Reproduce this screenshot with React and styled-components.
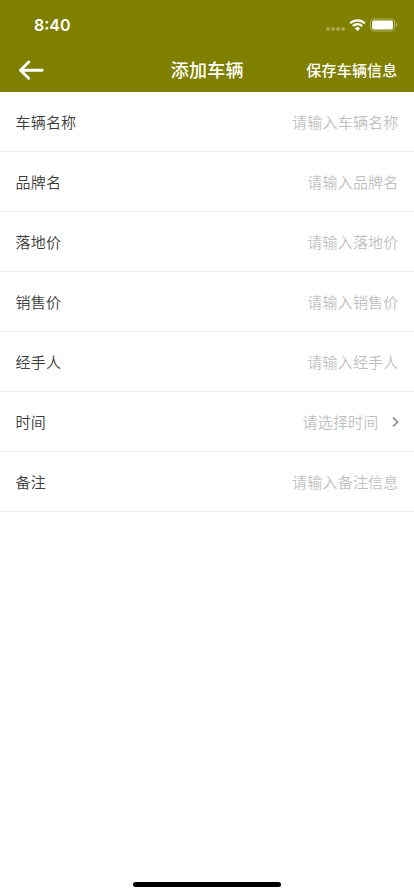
import React, { useState } from "react";
import styled, { createGlobalStyle } from "styled-components";

const GlobalStyle = createGlobalStyle`
  * {
    box-sizing: border-box;
  }
  body {
    margin: 0;
    background-color: #fff;
    font-family: "Noto Sans CJK SC", sans-serif;
  }
`;

const Screen = styled.div`
  display: flex;
  flex-direction: column;
  width: 100%;
  height: 896px;
  background-color: #fff;
  overflow: hidden;
`;

const Header = styled.header`
  height: 92px;
  background-color: #808000;
  color: #fff;
`;

const StatusBar = styled.div`
  display: flex;
  justify-content: space-between;
  align-items: center;
  height: 48px;
  padding: 2px 16px 0 34px;
`;

const Clock = styled.span`
  font-family: Inter, sans-serif;
  font-size: 16px;
  font-weight: 600;
  line-height: 20px;
`;

const StatusIcons = styled.div`
  display: flex;
  align-items: center;
  gap: 4px;
`;

const NavBar = styled.div`
  display: grid;
  grid-template-columns: 1fr auto 1fr;
  align-items: center;
  height: 44px;
  padding: 0 16.5px 0 18px;
`;

const BackButton = styled.button`
  display: flex;
  justify-self: start;
  padding: 0;
  border: none;
  background: transparent;
  color: inherit;
  cursor: pointer;
`;

const Title = styled.h1`
  margin: 0;
  padding: 0 1px 2px 0;
  font-size: 18px;
  font-weight: 500;
  line-height: 26px;
  letter-spacing: 0.3px;
`;

const SaveButton = styled.button`
  justify-self: end;
  padding: 0;
  border: none;
  background: transparent;
  color: inherit;
  font-family: inherit;
  font-size: 15px;
  font-weight: 500;
  line-height: 22px;
  letter-spacing: 0.2px;
  white-space: nowrap;
  cursor: pointer;
`;

const Form = styled.form`
  flex: 1;
`;

const Row = styled.label`
  display: flex;
  align-items: center;
  height: 60px;
  padding: 0 15.5px;
  border-bottom: 1px solid #f0f0f0;
  font-size: 15px;
  font-weight: 350;
  letter-spacing: 0.2px;
`;

const Label = styled.span`
  flex: none;
  color: #3c3c3c;
  line-height: 22px;
`;

const Input = styled.input`
  flex: 1;
  min-width: 0;
  height: 22px;
  padding: 0;
  border: none;
  outline: none;
  background: transparent;
  color: #333;
  font: inherit;
  letter-spacing: inherit;
  text-align: right;
  &::placeholder {
    color: #bfbfbf;
    opacity: 1;
  }
`;

const Picker = styled.span`
  display: flex;
  flex: 1;
  justify-content: flex-end;
  align-items: center;
  gap: 13px;
  color: #bfbfbf;
  line-height: 22px;
`;

const HomeArea = styled.div`
  display: flex;
  justify-content: center;
  height: 14px;
`;

const HomeIndicator = styled.div`
  width: 148px;
  height: 5px;
  border-radius: 3px;
  background-color: #000;
`;

const fields = [
  { name: "carName", label: "车辆名称", placeholder: "请输入车辆名称" },
  { name: "brand", label: "品牌名", placeholder: "请输入品牌名" },
  { name: "landPrice", label: "落地价", placeholder: "请输入落地价" },
  { name: "salePrice", label: "销售价", placeholder: "请输入销售价" },
  { name: "handler", label: "经手人", placeholder: "请输入经手人" },
  { name: "time", label: "时间", placeholder: "请选择时间", picker: true },
  { name: "remark", label: "备注", placeholder: "请输入备注信息" },
];

const SignalIcon = () => (
  <svg width="20" height="14" viewBox="0 0 20 14" fill="#fff" opacity="0.3">
    <circle cx="3" cy="11" r="2" />
    <circle cx="8" cy="11" r="2" />
    <circle cx="13" cy="11" r="2" />
    <circle cx="18" cy="11" r="2" />
  </svg>
);

const WifiIcon = () => (
  <svg width="17" height="12" viewBox="0 0 17 12" fill="none" stroke="#fff">
    <path d="M1.1 4.3a10.6 10.6 0 0 1 14.8 0" strokeWidth="2.3" />
    <path d="M3.8 7.1a6.7 6.7 0 0 1 9.4 0" strokeWidth="2.1" />
    <path d="M8.5 11.9 5.9 9.4a3.7 3.7 0 0 1 5.2 0Z" fill="#fff" stroke="none" />
  </svg>
);

const BatteryIcon = () => (
  <svg width="28" height="14" viewBox="0 0 28 14" fill="none">
    <rect x="0.5" y="1" width="24" height="12" rx="3.5" stroke="#fff" strokeOpacity="0.4" />
    <rect x="2" y="2.5" width="21" height="9" rx="2" fill="#fff" />
    <path d="M26 5v4c.8-.3 1.2-1.1 1.2-2S26.8 5.3 26 5Z" fill="#fff" fillOpacity="0.5" />
  </svg>
);

const BackIcon = () => (
  <svg
    width="26"
    height="20"
    viewBox="0 0 26 20"
    fill="none"
    stroke="#fff"
    strokeWidth="2.9"
    strokeLinecap="round"
    strokeLinejoin="round"
  >
    <path d="M10.7 2 2.500 10.200l8.200 8M3 10.200h21.200" />
  </svg>
);

const ArrowIcon = () => (
  <svg width="7" height="10" viewBox="0 0 7 10" fill="none" stroke="#8c8c8c" strokeWidth="1.6">
    <path d="M1 0.6 5.7 5 1 9.4" />
  </svg>
);

const AddCar = () => {
  const [form, setForm] = useState({});

  const onChange = (e) => {
    setForm({ ...form, [e.target.name]: e.target.value });
  };

  return (
    <Screen>
      <GlobalStyle />
      <Header>
        <StatusBar>
          <Clock>8:40</Clock>
          <StatusIcons>
            <SignalIcon />
            <WifiIcon />
            <BatteryIcon />
          </StatusIcons>
        </StatusBar>
        <NavBar>
          <BackButton type="button">
            <BackIcon />
          </BackButton>
          <Title>添加车辆</Title>
          <SaveButton type="button">保存车辆信息</SaveButton>
        </NavBar>
      </Header>
      <Form>
        {fields.map((item) => (
          <Row key={item.name}>
            <Label>{item.label}</Label>
            {item.picker ? (
              <Picker>
                {item.placeholder}
                <ArrowIcon />
              </Picker>
            ) : (
              <Input
                name={item.name}
                value={form[item.name] || ""}
                placeholder={item.placeholder}
                onChange={onChange}
              />
            )}
          </Row>
        ))}
      </Form>
      <HomeArea>
        <HomeIndicator />
      </HomeArea>
    </Screen>
  );
};

export default AddCar;
